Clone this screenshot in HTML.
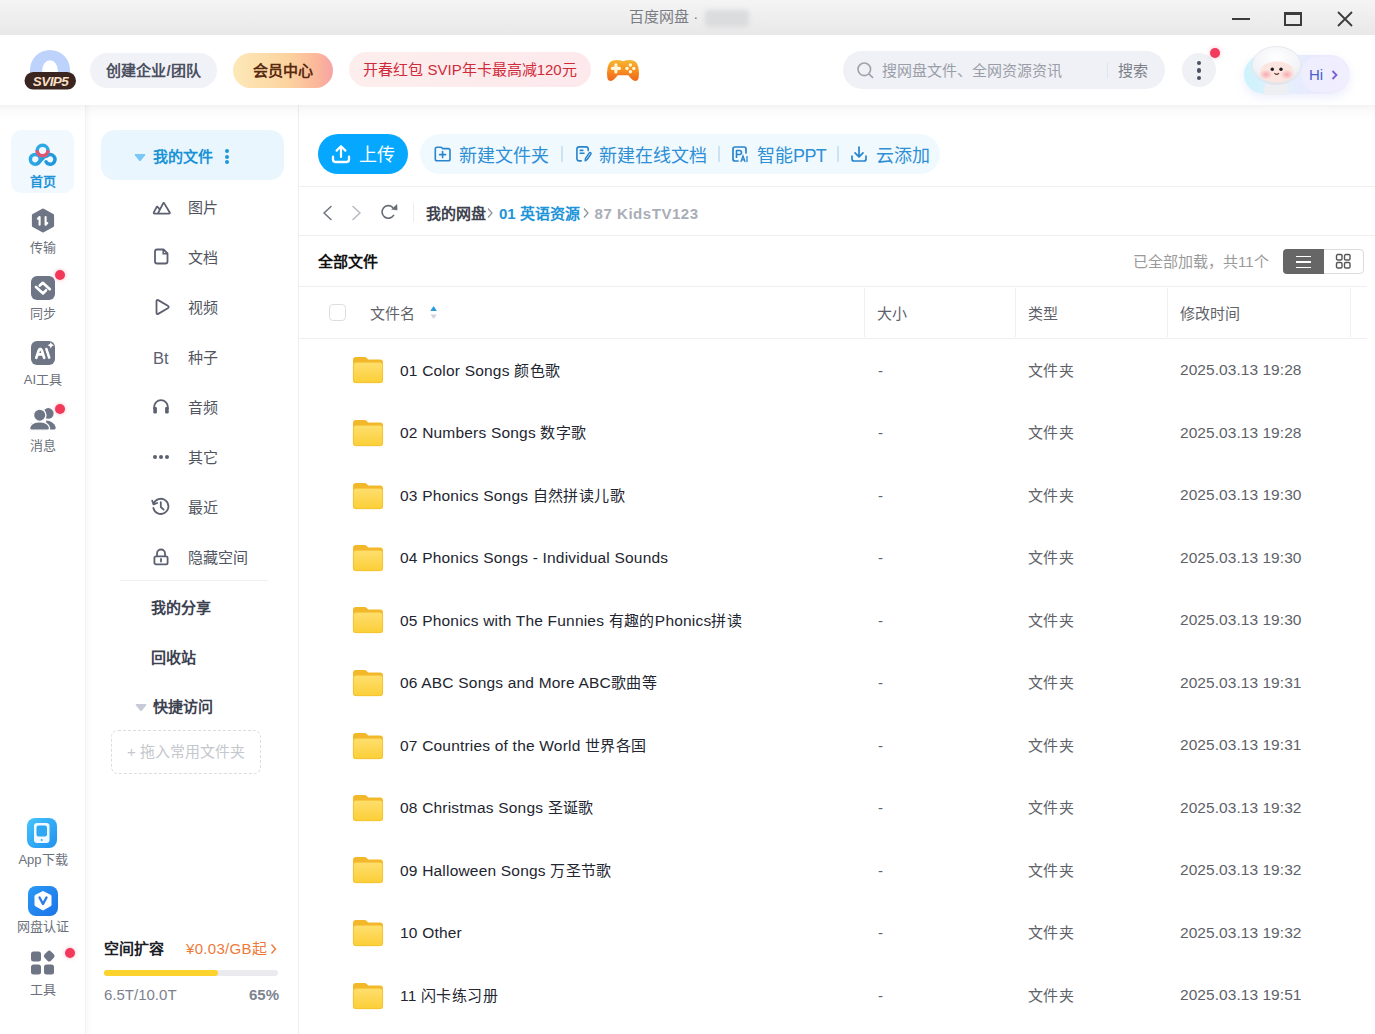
<!DOCTYPE html>
<html lang="zh-CN"><head><meta charset="utf-8">
<style>
*{box-sizing:border-box;margin:0;padding:0}
html,body{width:1375px;height:1034px;overflow:hidden;background:#fff;font-family:"Liberation Sans",sans-serif;color:#333}
.a{position:absolute}
.t{position:absolute;white-space:nowrap;line-height:20px;height:20px}
svg{position:absolute;overflow:visible}
#title{left:0;top:0;width:1375px;height:35px;background:linear-gradient(#f4f4f4,#e8e8e8)}
#header{left:0;top:35px;width:1375px;height:70px;background:#fff}
#shadow{left:0;top:105px;width:1375px;height:14px;background:linear-gradient(rgba(0,0,0,.05),rgba(0,0,0,.035) 14%,rgba(0,0,0,.024) 30%,rgba(0,0,0,.014) 50%,rgba(0,0,0,.006) 75%,rgba(0,0,0,0))}
#nav{left:0;top:105px;width:86px;height:929px;background:#fff;border-right:1px solid #f3f3f4}
#side{left:86px;top:105px;width:213px;height:929px;background:linear-gradient(90deg,#f9f9f9,#fdfdfd 4px,#fff 6px);border-right:1px solid #eeeeef}
#main{left:299px;top:105px;width:1076px;height:929px;background:#fff}
.nt{font-size:13px;color:#6b707b;width:86px;left:0;text-align:center}
.si{font-size:15px;color:#50545e;left:102px}
.row .t{font-size:15px}
</style></head><body>
<!-- TITLE BAR -->
<div id="title" class="a">
  <div class="t" style="left:629px;top:7px;font-size:15px;color:#7a7d83">百度网盘 ·</div>
  <div class="a" style="left:705px;top:10px;width:44px;height:17px;background:#dbdcde;border-radius:4px;filter:blur(2px)"></div>
  <div class="a" style="left:1232px;top:18px;width:18px;height:2px;background:#3c3c3c"></div>
  <div class="a" style="left:1284px;top:12px;width:18px;height:14px;border:2px solid #3c3c3c;border-top-width:3px"></div>
  <svg style="left:1337px;top:11px" width="16" height="16" viewBox="0 0 16 16"><path d="M1 1L15 15M15 1L1 15" stroke="#3c3c3c" stroke-width="1.8"/></svg>
</div>
<!-- HEADER -->
<div id="header" class="a">
</div>
<div id="nav" class="a"></div>
<div id="side" class="a"></div>
<div id="main" class="a"></div>
<div id="shadow" class="a"></div>
<!-- NAV -->
<div class="a" style="left:11px;top:130px;width:63px;height:63px;border-radius:10px;background:#f1f8fe"></div>
<svg style="left:24px;top:140px" width="38" height="30" viewBox="0 0 38 30">
  <circle cx="11.3" cy="19.3" r="4.9" fill="none" stroke="#2ba6e6" stroke-width="3.5"/>
  <path d="M13.8 23.2 L22.5 14.8" stroke="#2a9fe2" stroke-width="3.5" stroke-linecap="round"/>
  <path d="M22.8 16 A4.8 4.8 0 1 1 22.04 21.8" fill="none" stroke="#1f98dd" stroke-width="3.5" stroke-linecap="round"/>
  <circle cx="18.6" cy="10.8" r="5.45" fill="none" stroke="#2fa8e6" stroke-width="3.5"/>
  <path d="M24.05 10.3 A5.45 5.45 0 0 1 13.15 10.3" fill="none" stroke="#e1556f" stroke-width="3.5"/>
</svg>
<div class="t nt" style="top:172px;color:#1f94da;font-weight:600">首页</div>
<svg style="left:31px;top:208px" width="24" height="25" viewBox="0 0 24 25">
  <path d="M12 2 L21.6 7.3 V17.7 L12 23 L2.4 17.7 V7.3 Z" fill="#6e7585" stroke="#6e7585" stroke-width="3" stroke-linejoin="round"/>
  <path d="M8.6 9 V16.8 M6.9 10.7 L8.6 9" stroke="#fff" stroke-width="2.1" stroke-linecap="round" fill="none"/>
  <path d="M14.6 9 V16.8 M14.6 16.8 L16.3 15.1" stroke="#fff" stroke-width="2.1" stroke-linecap="round" fill="none"/>
</svg>
<div class="t nt" style="top:238px">传输</div>
<svg style="left:31px;top:276px" width="24" height="24" viewBox="0 0 24 24">
  <rect x="0" y="0" width="24" height="24" rx="6" fill="#6e7585"/>
  <path d="M8.8 9.6 L11.8 6.8 L18.8 13.2 M5 11 L12.1 17.4 L15 14.3" stroke="#fff" stroke-width="2.7" stroke-linecap="round" stroke-linejoin="round" fill="none"/>
</svg>
<div class="a" style="left:55px;top:270px;width:10px;height:10px;border-radius:5px;background:#f2395b;box-shadow:0 0 4px rgba(242,57,91,.35)"></div>
<div class="t nt" style="top:304px">同步</div>
<svg style="left:31px;top:341px" width="24" height="24" viewBox="0 0 24 24">
  <rect x="0" y="0" width="24" height="24" rx="6" fill="#6e7585"/>
  <path d="M5.3 16.8 L7.6 9.8 Q9.2 6 11 9.8 L13.2 16.8 M6.8 13.4 H11.8" stroke="#fff" stroke-width="2.7" stroke-linecap="round" stroke-linejoin="round" fill="none"/>
  <path d="M15.4 8 L18.2 16.6" stroke="#fff" stroke-width="2.6" stroke-linecap="round"/>
  <path d="M19.8 1.2 Q20.4 3.8 23 4.3 Q20.4 4.8 19.8 7.4 Q19.2 4.8 16.6 4.3 Q19.2 3.8 19.8 1.2Z" fill="#fff"/>
</svg>
<div class="t nt" style="top:370px">AI工具</div>
<svg style="left:29px;top:407px" width="28" height="24" viewBox="0 0 28 24">
  <circle cx="19.3" cy="6.4" r="5.3" fill="#6e7585"/>
  <path d="M17 13.5 Q24.5 14 26.6 20 Q27 22.6 24.6 22.6 H18 Z" fill="#6e7585"/>
  <circle cx="10.7" cy="8.2" r="6.2" fill="#6e7585" stroke="#fff" stroke-width="1.4"/>
  <path d="M0.5 21 Q1.8 14.8 10.5 14.8 Q19.4 14.8 20.6 21 Q20.6 23.2 18.4 23.2 H2.8 Q0.5 23.2 0.5 21Z" fill="#6e7585" stroke="#fff" stroke-width="1.3"/>
</svg>
<div class="a" style="left:55px;top:404px;width:10px;height:10px;border-radius:5px;background:#f2395b;box-shadow:0 0 4px rgba(242,57,91,.35)"></div>
<div class="t nt" style="top:436px">消息</div>

<svg style="left:27px;top:818px" width="30" height="30" viewBox="0 0 30 30">
  <defs><linearGradient id="ag" x1="0" y1="0" x2="1" y2="1"><stop offset="0" stop-color="#45c4fc"/><stop offset="1" stop-color="#2091ef"/></linearGradient></defs>
  <rect x="0" y="0" width="30" height="30" rx="8" fill="url(#ag)"/>
  <rect x="7" y="5" width="15.5" height="20" rx="3" fill="#fff" opacity=".92"/>
  <rect x="9.5" y="7.5" width="10.5" height="11" rx="2" fill="#2ea8f4"/>
  <circle cx="14.7" cy="22" r="1" fill="#2ea8f4"/>
</svg>
<div class="t nt" style="top:850px">App下载</div>
<svg style="left:28px;top:886px" width="30" height="30" viewBox="0 0 30 30">
  <defs><linearGradient id="vg" x1="0" y1="0" x2="1" y2="1"><stop offset="0" stop-color="#2a9af5"/><stop offset="1" stop-color="#1a73e8"/></linearGradient></defs>
  <rect x="0" y="0" width="30" height="30" rx="8" fill="url(#vg)"/>
  <path d="M15 5.5 L23 9.5 V19.5 L15 24 L7 19.5 V9.5 Z" fill="#fff" stroke="#fff" stroke-width="1" stroke-linejoin="round"/>
  <path d="M11.5 11.5 L15 18 L18.5 11.5" stroke="#2a7ee6" stroke-width="2.4" fill="none" stroke-linecap="round" stroke-linejoin="round"/>
</svg>
<div class="t nt" style="top:917px">网盘认证</div>
<svg style="left:30px;top:950px" width="26" height="26" viewBox="0 0 26 26">
  <rect x="1" y="1.5" width="10" height="10" rx="2.5" fill="#6e7585"/>
  <rect x="14.5" y="1.5" width="9" height="9" rx="2.5" fill="#6e7585" transform="rotate(45 19 6.3)"/>
  <rect x="1" y="14.5" width="10" height="10" rx="2.5" fill="#6e7585"/>
  <rect x="14" y="14.5" width="10" height="10" rx="2.5" fill="#6e7585"/>
</svg>
<div class="a" style="left:65px;top:948px;width:10px;height:10px;border-radius:5px;background:#f2395b;box-shadow:0 0 4px rgba(242,57,91,.35)"></div>
<div class="t nt" style="top:980px">工具</div>
<!-- SIDEBAR -->
<div class="a" style="left:101px;top:130px;width:183px;height:50px;border-radius:14px;background:#e9f6fe"></div>
<svg style="left:134px;top:153px" width="12" height="9" viewBox="0 0 12 9"><path d="M1.5 1 H10.5 Q12 1 11 2.4 L7 7.5 Q6 8.6 5 7.5 L1 2.4 Q0 1 1.5 1Z" fill="#7cc8f5"/></svg>
<div class="t" style="left:153px;top:147px;font-size:15px;font-weight:700;color:#1a93d6">我的文件</div>
<div class="a" style="left:225.4px;top:149px;width:4px;height:4px;border-radius:2px;background:#2196d6"></div>
<div class="a" style="left:225.4px;top:154.6px;width:4px;height:4px;border-radius:2px;background:#2196d6"></div>
<div class="a" style="left:225.4px;top:160.2px;width:4px;height:4px;border-radius:2px;background:#2196d6"></div>

<svg style="left:152px;top:200px" width="20" height="16" viewBox="0 0 20 16">
  <path d="M5.8 13.6 L11 3.6 Q11.7 2.3 12.4 3.6 L17.6 12.2 Q18.4 13.6 16.8 13.6 H2.8 Q1.2 13.6 1.9 12.2 L4.5 7.3 Q5.2 6.1 6 7.2 L7.3 8.9" fill="none" stroke="#5c6070" stroke-width="1.8" stroke-linejoin="round" stroke-linecap="round"/>
</svg>
<div class="t si" style="left:188px;top:197.8px">图片</div>
<svg style="left:153px;top:248px" width="16" height="17" viewBox="0 0 16 17">
  <path d="M4 1.5 H10.5 L14.5 5.5 V13.5 Q14.5 15.5 12.5 15.5 H4 Q2 15.5 2 13.5 V3.5 Q2 1.5 4 1.5Z" fill="none" stroke="#5c6070" stroke-width="1.8" stroke-linejoin="round"/>
  <path d="M10.2 1.8 V5.8 H14.3" fill="none" stroke="#5c6070" stroke-width="1.5"/>
</svg>
<div class="t si" style="left:188px;top:247.8px">文档</div>
<svg style="left:154px;top:298px" width="16" height="18" viewBox="0 0 16 18">
  <path d="M2.5 3.5 Q2.5 1.2 4.6 2.4 L13.8 7.8 Q15.6 9 13.8 10.2 L4.6 15.6 Q2.5 16.8 2.5 14.5 Z" fill="none" stroke="#5c6070" stroke-width="1.8" stroke-linejoin="round"/>
</svg>
<div class="t si" style="left:188px;top:297.8px">视频</div>
<div class="t" style="left:153px;top:347.5px;font-size:16.5px;color:#5c6070">Bt</div>
<div class="t si" style="left:188px;top:347.8px">种子</div>
<svg style="left:152px;top:398px" width="18" height="17" viewBox="0 0 18 17">
  <path d="M2.2 11 V9 A6.8 6.8 0 0 1 15.8 9 V11" fill="none" stroke="#5c6070" stroke-width="1.8"/>
  <rect x="1.3" y="9" width="3.6" height="6.5" rx="1.2" fill="#5c6070"/>
  <rect x="13.1" y="9" width="3.6" height="6.5" rx="1.2" fill="#5c6070"/>
</svg>
<div class="t si" style="left:188px;top:397.8px">音频</div>
<div class="a" style="left:153.3px;top:455px;width:4px;height:4px;border-radius:2px;background:#5c6070"></div>
<div class="a" style="left:159.3px;top:455px;width:4px;height:4px;border-radius:2px;background:#5c6070"></div>
<div class="a" style="left:165.3px;top:455px;width:4px;height:4px;border-radius:2px;background:#5c6070"></div>
<div class="t si" style="left:188px;top:447.8px">其它</div>
<svg style="left:151px;top:497px" width="20" height="20" viewBox="0 0 20 20">
  <path d="M2.6 7 A7.6 7.6 0 1 1 2.4 11" fill="none" stroke="#5c6070" stroke-width="1.8" stroke-linecap="round"/>
  <path d="M1.2 3.6 L2.6 7.4 L6.2 6" fill="none" stroke="#5c6070" stroke-width="1.8" stroke-linecap="round" stroke-linejoin="round"/>
  <path d="M9.8 5.2 V10 L12.6 12.6" fill="none" stroke="#5c6070" stroke-width="1.8" stroke-linecap="round" stroke-linejoin="round"/>
</svg>
<div class="t si" style="left:188px;top:497.8px">最近</div>
<svg style="left:152px;top:548px" width="18" height="18" viewBox="0 0 18 18">
  <path d="M5 8.5 V5.5 A4 4 0 0 1 13 5.5 V8.5" fill="none" stroke="#5c6070" stroke-width="1.8"/>
  <rect x="2.4" y="8.4" width="13.2" height="8" rx="1.6" fill="none" stroke="#5c6070" stroke-width="1.8"/>
  <path d="M9 11 V13.6" stroke="#5c6070" stroke-width="1.8" stroke-linecap="round"/>
</svg>
<div class="t si" style="left:188px;top:547.8px">隐藏空间</div>
<div class="a" style="left:120px;top:580px;width:148px;height:1px;background:#f0f0f3"></div>
<div class="t" style="left:151px;top:598px;font-size:15px;font-weight:700;color:#3c4150">我的分享</div>
<div class="t" style="left:151px;top:648px;font-size:15px;font-weight:700;color:#3c4150">回收站</div>
<svg style="left:135px;top:703px" width="12" height="9" viewBox="0 0 12 9"><path d="M1.5 1 H10.5 Q12 1 11 2.4 L7 7.5 Q6 8.6 5 7.5 L1 2.4 Q0 1 1.5 1Z" fill="#c8cad8"/></svg>
<div class="t" style="left:153px;top:697px;font-size:15px;font-weight:700;color:#3c4150">快捷访问</div>
<div class="a" style="left:111px;top:730px;width:150px;height:44px;border-radius:7px;border:1px dashed #dcdde3"></div>
<div class="t" style="left:111px;top:742px;width:150px;text-align:center;font-size:15px;color:#c5c7ce">+ 拖入常用文件夹</div>

<div class="t" style="left:104px;top:939px;font-size:15px;font-weight:700;color:#1b1e28">空间扩容</div>
<div class="t" style="left:186px;top:939px;font-size:15px;letter-spacing:0.3px;color:#ee7a3a">¥0.03/GB起</div>
<svg style="left:270px;top:943px" width="7" height="12" viewBox="0 0 7 12"><path d="M1.5 1.5 L5.5 6 L1.5 10.5" stroke="#ee7a3a" stroke-width="1.4" fill="none"/></svg>
<div class="a" style="left:104px;top:969.5px;width:174px;height:6.5px;border-radius:4px;background:#ebebef"></div>
<div class="a" style="left:104px;top:969.5px;width:114px;height:6.5px;border-radius:4px;background:#fbd32c"></div>
<div class="t" style="left:104px;top:985px;font-size:15px;color:#7d818d">6.5T/10.0T</div>
<div class="t" style="left:200px;top:985px;width:79px;text-align:right;font-size:15px;font-weight:700;color:#7d838f">65%</div>
<!-- MAIN -->
<div class="a" style="left:318px;top:134px;width:90px;height:40px;border-radius:20px;background:#06a7ff"></div>
<svg style="left:331px;top:144px" width="20" height="20" viewBox="0 0 20 20">
  <path d="M10 13 V2.5 M5.6 6.6 L10 2.2 L14.4 6.6" stroke="#fff" stroke-width="2.2" fill="none" stroke-linecap="round" stroke-linejoin="round"/>
  <path d="M2 12.6 V15.6 Q2 18 4.4 18 H15.6 Q18 18 18 15.6 V12.6" stroke="#fff" stroke-width="2.3" fill="none" stroke-linecap="round"/>
</svg>
<div class="t" style="left:359px;top:143px;height:24px;line-height:24px;font-size:18px;color:#fff">上传</div>
<div class="a" style="left:420px;top:134px;width:520px;height:40px;border-radius:20px;background:#eff9fe"></div>
<svg style="left:433px;top:145px" width="19" height="17" viewBox="0 0 19 17">
  <path d="M2.3 4 Q2.3 2.3 4 2.3 H7.6 Q8.4 2.3 9 2.9 L9.8 3.6 H15.3 Q17 3.6 17 5.3 V13.9 Q17 15.7 15.3 15.7 H4 Q2.3 15.7 2.3 13.9 Z" fill="none" stroke="#2a84cc" stroke-width="1.6" stroke-linejoin="round"/>
  <path d="M9.6 6.6 V12.6 M6.6 9.6 H12.6" stroke="#2a84cc" stroke-width="1.6" stroke-linecap="round"/>
</svg>
<div class="t" style="left:459px;top:144px;height:24px;line-height:24px;font-size:18px;color:#2f8fd5">新建文件夹</div>
<div class="a" style="left:561px;top:146px;width:1.5px;height:16px;background:#cde3f2"></div>
<svg style="left:575px;top:145px" width="18" height="18" viewBox="0 0 18 18">
  <path d="M13.2 5.6 V4.2 Q13.2 1.9 10.9 1.9 H4.2 Q1.9 1.9 1.9 4.2 V13.6 Q1.9 15.9 4.2 15.9 H6.2" fill="none" stroke="#2a84cc" stroke-width="1.6" stroke-linecap="round"/>
  <path d="M5.3 5.4 H7.8 M5.1 8.3 H9" stroke="#2a84cc" stroke-width="1.6" stroke-linecap="round"/>
  <path d="M10.2 15.8 L10.4 13.6 L14.3 7.9 Q14.9 7.1 15.7 7.7 Q16.4 8.3 15.9 9.1 L12 14.7 Z" fill="none" stroke="#2a84cc" stroke-width="1.5" stroke-linejoin="round"/>
</svg>
<div class="t" style="left:599px;top:144px;height:24px;line-height:24px;font-size:18px;color:#2f8fd5">新建在线文档</div>
<div class="a" style="left:718px;top:146px;width:1.5px;height:16px;background:#cde3f2"></div>
<svg style="left:731px;top:145px" width="18" height="18" viewBox="0 0 18 18">
  <path d="M7 16 H4 Q2 16 2 14 V4 Q2 2 4 2 H13 Q15 2 15 4 V8" fill="none" stroke="#2a84cc" stroke-width="1.7" stroke-linecap="round"/>
  <path d="M5.5 13 V5.5 H8.5 Q10.5 5.5 10.5 7.5 Q10.5 9.5 8.5 9.5 H5.5" fill="none" stroke="#2a84cc" stroke-width="1.6" stroke-linejoin="round"/>
  <path d="M10 16.5 L12 11 L14 16.5 M10.8 14.8 H13.2 M16 11.5 V16.5" stroke="#2a84cc" stroke-width="1.3" fill="none" stroke-linecap="round"/>
</svg>
<div class="t" style="left:757px;top:144px;height:24px;line-height:24px;font-size:18px;color:#2f8fd5">智能<span style="letter-spacing:-0.6px">PPT</span></div>
<div class="a" style="left:837px;top:146px;width:1.5px;height:16px;background:#cde3f2"></div>
<svg style="left:850px;top:145px" width="18" height="18" viewBox="0 0 18 18">
  <path d="M9 2 V11.5 M5 7.8 L9 11.8 L13 7.8" stroke="#2a84cc" stroke-width="1.7" fill="none" stroke-linecap="round" stroke-linejoin="round"/>
  <path d="M2 11 V14 Q2 16 4 16 H14 Q16 16 16 14 V11" stroke="#2a84cc" stroke-width="1.7" fill="none" stroke-linecap="round"/>
</svg>
<div class="t" style="left:876px;top:144px;height:24px;line-height:24px;font-size:18px;color:#2f8fd5">云添加</div>
<div class="a" style="left:299px;top:186px;width:1076px;height:1px;background:#efeff2"></div>

<!-- breadcrumb -->
<svg style="left:321px;top:205px" width="12" height="16" viewBox="0 0 12 16"><path d="M10 1.5 L3 8 L10 14.5" stroke="#707580" stroke-width="1.6" fill="none" stroke-linecap="round" stroke-linejoin="round"/></svg>
<svg style="left:350.5px;top:205px" width="12" height="16" viewBox="0 0 12 16"><path d="M2 1.5 L9 8 L2 14.5" stroke="#b8bbc3" stroke-width="1.6" fill="none" stroke-linecap="round" stroke-linejoin="round"/></svg>
<svg style="left:380px;top:203px" width="19" height="19" viewBox="0 0 19 19">
  <path d="M12.6 4.3 A6.3 6.3 0 1 0 13.6 12.4" fill="none" stroke="#676b73" stroke-width="1.6" stroke-linecap="round"/>
  <path d="M16.9 1.6 L17.1 7 L11.7 6.3 Z" fill="#676b73" stroke="#676b73" stroke-width=".6" stroke-linejoin="round"/>
</svg>
<div class="a" style="left:413px;top:203px;width:1px;height:19px;background:#ededf0"></div>
<div class="t" style="left:426px;top:203.5px;font-size:15px;font-weight:700;color:#3e424d">我的网盘</div>
<svg style="left:487px;top:207px" width="6" height="12" viewBox="0 0 6 12"><path d="M1 1.5 L5 6 L1 10.5" stroke="#8a8e98" stroke-width="1.2" fill="none"/></svg>
<div class="t" style="left:499px;top:203.5px;font-size:15px;font-weight:700;color:#1e95d8">01 英语资源</div>
<svg style="left:583px;top:207px" width="6" height="12" viewBox="0 0 6 12"><path d="M1 1.5 L5 6 L1 10.5" stroke="#8a8e98" stroke-width="1.2" fill="none"/></svg>
<div class="t" style="left:594.5px;top:203.5px;font-size:15px;font-weight:700;letter-spacing:0.55px;color:#a9adb7">87 KidsTV123</div>
<div class="a" style="left:299px;top:235px;width:1076px;height:1px;background:#efeff2"></div>

<!-- list header -->
<div class="t" style="left:317.5px;top:251.5px;font-size:15px;font-weight:700;color:#111">全部文件</div>
<div class="t" style="left:1133px;top:252px;font-size:15px;color:#9a9a9a">已全部加载，共11个</div>
<div class="a" style="left:1283px;top:249px;width:81px;height:25px;border-radius:4px;border:1px solid #dcdcdc;background:#fff"></div>
<div class="a" style="left:1283px;top:249px;width:41px;height:25px;border-radius:4px 0 0 4px;background:#666"></div>
<div class="a" style="left:1296px;top:255.5px;width:15px;height:1.8px;background:#fff"></div>
<div class="a" style="left:1296px;top:261px;width:15px;height:1.8px;background:#fff"></div>
<div class="a" style="left:1296px;top:266.6px;width:15px;height:1.8px;background:#fff"></div>
<svg style="left:1335px;top:253px" width="17" height="17" viewBox="0 0 17 17">
  <rect x="1.5" y="1.5" width="5.5" height="5.5" rx="1.3" fill="none" stroke="#555" stroke-width="1.4"/>
  <rect x="9.5" y="1.5" width="5.5" height="5.5" rx="1.3" fill="none" stroke="#555" stroke-width="1.4"/>
  <rect x="1.5" y="9.5" width="5.5" height="5.5" rx="1.3" fill="none" stroke="#555" stroke-width="1.4"/>
  <rect x="9.5" y="9.5" width="5.5" height="5.5" rx="1.3" fill="none" stroke="#555" stroke-width="1.4"/>
</svg>
<div class="a" style="left:299px;top:286px;width:1068px;height:1px;background:#efeff2"></div>
<div class="a" style="left:329px;top:304px;width:17px;height:17px;border-radius:4px;border:1px solid #dedee2;background:#fff"></div>
<div class="t" style="left:369.5px;top:303.5px;font-size:15px;color:#5f6369">文件名</div>
<svg style="left:429px;top:305px" width="9" height="15" viewBox="0 0 9 15"><path d="M4.2 1.6 Q4.6 1.2 5 1.6 L7.6 5.4 Q7.9 6 7.2 6 H1.9 Q1.3 6 1.6 5.4 Z" fill="#2a9be0"/><path d="M4.2 13.4 Q4.6 13.8 5 13.4 L7.4 10 Q7.7 9.4 7 9.4 H2.1 Q1.5 9.4 1.8 10 Z" fill="#d3d1dc"/></svg>
<div class="a" style="left:864px;top:288px;width:1px;height:49px;background:#f0f0f2"></div>
<div class="t" style="left:877px;top:303.5px;font-size:15px;color:#5f6369">大小</div>
<div class="a" style="left:1015px;top:288px;width:1px;height:49px;background:#f0f0f2"></div>
<div class="t" style="left:1028px;top:303.5px;font-size:15px;color:#5f6369">类型</div>
<div class="a" style="left:1167px;top:288px;width:1px;height:49px;background:#f0f0f2"></div>
<div class="t" style="left:1180px;top:303.5px;font-size:15px;color:#5f6369">修改时间</div>
<div class="a" style="left:1350px;top:288px;width:1px;height:49px;background:#f0f0f2"></div>
<div class="a" style="left:299px;top:338px;width:1068px;height:1px;background:#efeff2"></div>
<svg width="0" height="0" style="left:0;top:0"><defs><linearGradient id="fg" x1="0" y1="0" x2="0" y2="1"><stop offset="0" stop-color="#fedf6e"/><stop offset="1" stop-color="#fccf38"/></linearGradient></defs></svg>
<svg style="left:352px;top:356px" width="32" height="28" viewBox="0 0 32 28">
  <path d="M1 4 Q1 1 4 1 H12.5 Q14 1 15 2.2 L16.2 3.6 H28 Q31 3.6 31 6.6 V24 Q31 27 28 27 H4 Q1 27 1 24 Z" fill="#f3b72a"/>
  <rect x="1.4" y="6.3" width="29.2" height="20.4" rx="2.8" fill="url(#fg)" stroke="#f4c232" stroke-width=".8"/>
</svg>
<div class="t" style="left:400px;top:360.7px;font-size:15.5px;letter-spacing:0.2px;color:#222530">01 Color Songs <span style="font-size:15px;letter-spacing:0.4px">颜色歌</span></div>
<div class="t" style="left:878px;top:360.6px;font-size:15px;color:#5e6268">-</div>
<div class="t" style="left:1028px;top:360.6px;font-size:15px;letter-spacing:0.4px;color:#5e6268">文件夹</div>
<div class="t" style="left:1180px;top:360.3px;font-size:15.5px;letter-spacing:0.05px;color:#5e6268">2025.03.13 19:28</div>
<svg style="left:352px;top:419px" width="32" height="28" viewBox="0 0 32 28">
  <path d="M1 4 Q1 1 4 1 H12.5 Q14 1 15 2.2 L16.2 3.6 H28 Q31 3.6 31 6.6 V24 Q31 27 28 27 H4 Q1 27 1 24 Z" fill="#f3b72a"/>
  <rect x="1.4" y="6.3" width="29.2" height="20.4" rx="2.8" fill="url(#fg)" stroke="#f4c232" stroke-width=".8"/>
</svg>
<div class="t" style="left:400px;top:423.2px;font-size:15.5px;letter-spacing:0.2px;color:#222530">02 Numbers Songs <span style="font-size:15px;letter-spacing:0.4px">数字歌</span></div>
<div class="t" style="left:878px;top:423.1px;font-size:15px;color:#5e6268">-</div>
<div class="t" style="left:1028px;top:423.1px;font-size:15px;letter-spacing:0.4px;color:#5e6268">文件夹</div>
<div class="t" style="left:1180px;top:422.8px;font-size:15.5px;letter-spacing:0.05px;color:#5e6268">2025.03.13 19:28</div>
<svg style="left:352px;top:482px" width="32" height="28" viewBox="0 0 32 28">
  <path d="M1 4 Q1 1 4 1 H12.5 Q14 1 15 2.2 L16.2 3.6 H28 Q31 3.6 31 6.6 V24 Q31 27 28 27 H4 Q1 27 1 24 Z" fill="#f3b72a"/>
  <rect x="1.4" y="6.3" width="29.2" height="20.4" rx="2.8" fill="url(#fg)" stroke="#f4c232" stroke-width=".8"/>
</svg>
<div class="t" style="left:400px;top:485.7px;font-size:15.5px;letter-spacing:0.2px;color:#222530">03 Phonics Songs <span style="font-size:15px;letter-spacing:0.4px">自然拼读儿歌</span></div>
<div class="t" style="left:878px;top:485.6px;font-size:15px;color:#5e6268">-</div>
<div class="t" style="left:1028px;top:485.6px;font-size:15px;letter-spacing:0.4px;color:#5e6268">文件夹</div>
<div class="t" style="left:1180px;top:485.3px;font-size:15.5px;letter-spacing:0.05px;color:#5e6268">2025.03.13 19:30</div>
<svg style="left:352px;top:544px" width="32" height="28" viewBox="0 0 32 28">
  <path d="M1 4 Q1 1 4 1 H12.5 Q14 1 15 2.2 L16.2 3.6 H28 Q31 3.6 31 6.6 V24 Q31 27 28 27 H4 Q1 27 1 24 Z" fill="#f3b72a"/>
  <rect x="1.4" y="6.3" width="29.2" height="20.4" rx="2.8" fill="url(#fg)" stroke="#f4c232" stroke-width=".8"/>
</svg>
<div class="t" style="left:400px;top:548.2px;font-size:15.5px;letter-spacing:0.2px;color:#222530">04 Phonics Songs - Individual Sounds</div>
<div class="t" style="left:878px;top:548.1px;font-size:15px;color:#5e6268">-</div>
<div class="t" style="left:1028px;top:548.1px;font-size:15px;letter-spacing:0.4px;color:#5e6268">文件夹</div>
<div class="t" style="left:1180px;top:547.8px;font-size:15.5px;letter-spacing:0.05px;color:#5e6268">2025.03.13 19:30</div>
<svg style="left:352px;top:606px" width="32" height="28" viewBox="0 0 32 28">
  <path d="M1 4 Q1 1 4 1 H12.5 Q14 1 15 2.2 L16.2 3.6 H28 Q31 3.6 31 6.6 V24 Q31 27 28 27 H4 Q1 27 1 24 Z" fill="#f3b72a"/>
  <rect x="1.4" y="6.3" width="29.2" height="20.4" rx="2.8" fill="url(#fg)" stroke="#f4c232" stroke-width=".8"/>
</svg>
<div class="t" style="left:400px;top:610.7px;font-size:15.5px;letter-spacing:0.2px;color:#222530">05 Phonics with The Funnies <span style="font-size:15px;letter-spacing:0.4px">有趣的</span>Phonics<span style="font-size:15px;letter-spacing:0.4px">拼读</span></div>
<div class="t" style="left:878px;top:610.6px;font-size:15px;color:#5e6268">-</div>
<div class="t" style="left:1028px;top:610.6px;font-size:15px;letter-spacing:0.4px;color:#5e6268">文件夹</div>
<div class="t" style="left:1180px;top:610.3px;font-size:15.5px;letter-spacing:0.05px;color:#5e6268">2025.03.13 19:30</div>
<svg style="left:352px;top:669px" width="32" height="28" viewBox="0 0 32 28">
  <path d="M1 4 Q1 1 4 1 H12.5 Q14 1 15 2.2 L16.2 3.6 H28 Q31 3.6 31 6.6 V24 Q31 27 28 27 H4 Q1 27 1 24 Z" fill="#f3b72a"/>
  <rect x="1.4" y="6.3" width="29.2" height="20.4" rx="2.8" fill="url(#fg)" stroke="#f4c232" stroke-width=".8"/>
</svg>
<div class="t" style="left:400px;top:673.2px;font-size:15.5px;letter-spacing:0.2px;color:#222530">06 ABC Songs and More ABC<span style="font-size:15px;letter-spacing:0.4px">歌曲等</span></div>
<div class="t" style="left:878px;top:673.1px;font-size:15px;color:#5e6268">-</div>
<div class="t" style="left:1028px;top:673.1px;font-size:15px;letter-spacing:0.4px;color:#5e6268">文件夹</div>
<div class="t" style="left:1180px;top:672.8px;font-size:15.5px;letter-spacing:0.05px;color:#5e6268">2025.03.13 19:31</div>
<svg style="left:352px;top:732px" width="32" height="28" viewBox="0 0 32 28">
  <path d="M1 4 Q1 1 4 1 H12.5 Q14 1 15 2.2 L16.2 3.6 H28 Q31 3.6 31 6.6 V24 Q31 27 28 27 H4 Q1 27 1 24 Z" fill="#f3b72a"/>
  <rect x="1.4" y="6.3" width="29.2" height="20.4" rx="2.8" fill="url(#fg)" stroke="#f4c232" stroke-width=".8"/>
</svg>
<div class="t" style="left:400px;top:735.7px;font-size:15.5px;letter-spacing:0.2px;color:#222530">07 Countries of the World <span style="font-size:15px;letter-spacing:0.4px">世界各国</span></div>
<div class="t" style="left:878px;top:735.6px;font-size:15px;color:#5e6268">-</div>
<div class="t" style="left:1028px;top:735.6px;font-size:15px;letter-spacing:0.4px;color:#5e6268">文件夹</div>
<div class="t" style="left:1180px;top:735.3px;font-size:15.5px;letter-spacing:0.05px;color:#5e6268">2025.03.13 19:31</div>
<svg style="left:352px;top:794px" width="32" height="28" viewBox="0 0 32 28">
  <path d="M1 4 Q1 1 4 1 H12.5 Q14 1 15 2.2 L16.2 3.6 H28 Q31 3.6 31 6.6 V24 Q31 27 28 27 H4 Q1 27 1 24 Z" fill="#f3b72a"/>
  <rect x="1.4" y="6.3" width="29.2" height="20.4" rx="2.8" fill="url(#fg)" stroke="#f4c232" stroke-width=".8"/>
</svg>
<div class="t" style="left:400px;top:798.2px;font-size:15.5px;letter-spacing:0.2px;color:#222530">08 Christmas Songs <span style="font-size:15px;letter-spacing:0.4px">圣诞歌</span></div>
<div class="t" style="left:878px;top:798.1px;font-size:15px;color:#5e6268">-</div>
<div class="t" style="left:1028px;top:798.1px;font-size:15px;letter-spacing:0.4px;color:#5e6268">文件夹</div>
<div class="t" style="left:1180px;top:797.8px;font-size:15.5px;letter-spacing:0.05px;color:#5e6268">2025.03.13 19:32</div>
<svg style="left:352px;top:856px" width="32" height="28" viewBox="0 0 32 28">
  <path d="M1 4 Q1 1 4 1 H12.5 Q14 1 15 2.2 L16.2 3.6 H28 Q31 3.6 31 6.6 V24 Q31 27 28 27 H4 Q1 27 1 24 Z" fill="#f3b72a"/>
  <rect x="1.4" y="6.3" width="29.2" height="20.4" rx="2.8" fill="url(#fg)" stroke="#f4c232" stroke-width=".8"/>
</svg>
<div class="t" style="left:400px;top:860.7px;font-size:15.5px;letter-spacing:0.2px;color:#222530">09 Halloween Songs <span style="font-size:15px;letter-spacing:0.4px">万圣节歌</span></div>
<div class="t" style="left:878px;top:860.6px;font-size:15px;color:#5e6268">-</div>
<div class="t" style="left:1028px;top:860.6px;font-size:15px;letter-spacing:0.4px;color:#5e6268">文件夹</div>
<div class="t" style="left:1180px;top:860.3px;font-size:15.5px;letter-spacing:0.05px;color:#5e6268">2025.03.13 19:32</div>
<svg style="left:352px;top:919px" width="32" height="28" viewBox="0 0 32 28">
  <path d="M1 4 Q1 1 4 1 H12.5 Q14 1 15 2.2 L16.2 3.6 H28 Q31 3.6 31 6.6 V24 Q31 27 28 27 H4 Q1 27 1 24 Z" fill="#f3b72a"/>
  <rect x="1.4" y="6.3" width="29.2" height="20.4" rx="2.8" fill="url(#fg)" stroke="#f4c232" stroke-width=".8"/>
</svg>
<div class="t" style="left:400px;top:923.2px;font-size:15.5px;letter-spacing:0.2px;color:#222530">10 Other</div>
<div class="t" style="left:878px;top:923.1px;font-size:15px;color:#5e6268">-</div>
<div class="t" style="left:1028px;top:923.1px;font-size:15px;letter-spacing:0.4px;color:#5e6268">文件夹</div>
<div class="t" style="left:1180px;top:922.8px;font-size:15.5px;letter-spacing:0.05px;color:#5e6268">2025.03.13 19:32</div>
<svg style="left:352px;top:982px" width="32" height="28" viewBox="0 0 32 28">
  <path d="M1 4 Q1 1 4 1 H12.5 Q14 1 15 2.2 L16.2 3.6 H28 Q31 3.6 31 6.6 V24 Q31 27 28 27 H4 Q1 27 1 24 Z" fill="#f3b72a"/>
  <rect x="1.4" y="6.3" width="29.2" height="20.4" rx="2.8" fill="url(#fg)" stroke="#f4c232" stroke-width=".8"/>
</svg>
<div class="t" style="left:400px;top:985.7px;font-size:15.5px;letter-spacing:0.2px;color:#222530">11 <span style="font-size:15px;letter-spacing:0.4px">闪卡练习册</span></div>
<div class="t" style="left:878px;top:985.6px;font-size:15px;color:#5e6268">-</div>
<div class="t" style="left:1028px;top:985.6px;font-size:15px;letter-spacing:0.4px;color:#5e6268">文件夹</div>
<div class="t" style="left:1180px;top:985.3px;font-size:15.5px;letter-spacing:0.05px;color:#5e6268">2025.03.13 19:51</div>
<!-- HEADER CONTENT -->
<svg style="left:24px;top:48px" width="54" height="44" viewBox="0 0 54 44">
  <path d="M6 22 A20 20 0 0 1 46 22 L46 27 L33.8 27 L33.8 22 A7.8 9.7 0 0 0 18.2 22 L18.2 27 L6 27 Z" fill="#bdd3fb"/>
  <rect x="0.5" y="24" width="51.5" height="17.5" rx="8.75" fill="#3b2521"/>
  <text x="26.5" y="38.2" text-anchor="middle" font-family="Liberation Sans" font-style="italic" font-weight="bold" font-size="13.5" fill="#f7dfc4" letter-spacing="-0.6">SVIP5</text>
</svg>
<div class="a" style="left:90px;top:53px;width:127px;height:35px;border-radius:18px;background:#f1f2f7"></div>
<div class="t" style="left:90px;top:61px;width:127px;text-align:center;font-size:15px;font-weight:600;color:#4a5060">创建企业/团队</div>
<div class="a" style="left:233px;top:53px;width:100px;height:35px;border-radius:18px;background:linear-gradient(90deg,#fde9b8 0%,#fcd39f 55%,#fbb69a 85%,#f7a3a6 100%)"></div>
<div class="t" style="left:233px;top:61px;width:100px;text-align:center;font-size:15px;font-weight:600;color:#5a2a10">会员中心</div>
<div class="a" style="left:349px;top:52px;width:242px;height:35px;border-radius:18px;background:linear-gradient(90deg,#fdeeed,#fde9ec)"></div>
<div class="t" style="left:349px;top:60px;width:242px;text-align:center;font-size:15px;color:#cf2a3a">开春红包 SVIP年卡最高减120元</div>
<svg style="left:606px;top:58px" width="35" height="25" viewBox="0 0 35 25">
  <defs><linearGradient id="gp" x1="0" y1="0" x2="0" y2="1"><stop offset="0" stop-color="#f6b733"/><stop offset=".55" stop-color="#f88a1f"/><stop offset="1" stop-color="#ec661d"/></linearGradient></defs>
  <path d="M8 2.2 Q12.5 1.4 17 3.2 Q21.5 1.4 26 2.2 Q31 3 32.3 9 Q33.6 15 32.6 20.3 Q31.8 23.6 28.5 22.8 Q25.8 22 22.3 17.2 H11.7 Q8.2 22 5.5 22.8 Q2.2 23.6 1.4 20.3 Q0.4 15 1.7 9 Q3 3 8 2.2 Z" fill="url(#gp)"/>
  <path d="M9.9 6.8 V14 M6.3 10.4 H13.5" stroke="#fff8dc" stroke-width="3.1" stroke-linecap="round"/>
  <circle cx="24.4" cy="7" r="1.75" fill="#fff6d0"/><circle cx="24.4" cy="13.8" r="1.75" fill="#fff6d0"/><circle cx="21" cy="10.4" r="1.75" fill="#fff6d0"/><circle cx="27.8" cy="10.4" r="1.75" fill="#fff6d0"/>
</svg>
<!-- search -->
<div class="a" style="left:843px;top:51px;width:322px;height:38px;border-radius:19px;background:#f0f1f6"></div>
<svg style="left:857px;top:62px" width="17" height="16" viewBox="0 0 17 16"><circle cx="7.3" cy="7.3" r="6.3" fill="none" stroke="#9ea2ac" stroke-width="1.6"/><path d="M12 12 L15.5 15.3" stroke="#9ea2ac" stroke-width="1.7" stroke-linecap="round"/></svg>
<div class="t" style="left:882px;top:61px;font-size:15px;color:#9a9ea8">搜网盘文件、全网资源资讯</div>
<div class="a" style="left:1107px;top:62px;width:1px;height:16px;background:#e3e4ea"></div>
<div class="t" style="left:1118px;top:61px;font-size:15px;color:#7c7f88">搜索</div>
<!-- dots -->
<div class="a" style="left:1182px;top:53px;width:34px;height:34px;border-radius:17px;background:#f0f1f5"></div>
<div class="a" style="left:1197px;top:60.5px;width:4.4px;height:4.4px;border-radius:3px;background:#4b5162"></div>
<div class="a" style="left:1197px;top:68.3px;width:4.4px;height:4.4px;border-radius:3px;background:#4b5162"></div>
<div class="a" style="left:1197px;top:75.7px;width:4.4px;height:4.4px;border-radius:3px;background:#4b5162"></div>
<div class="a" style="left:1210px;top:48px;width:10px;height:10px;border-radius:5px;background:#f23a5c;box-shadow:0 0 4px rgba(242,58,92,.35)"></div>
<!-- avatar -->
<div class="a" style="left:1244px;top:55px;width:106px;height:39px;border-radius:20px;background:linear-gradient(90deg,#cdf3fb 0%,#e3effd 40%,#ebe9fd 70%,#f0eefd 100%);box-shadow:0 3px 10px rgba(200,205,250,.35)"></div>
<div class="a" style="left:1301px;top:57px;width:47px;height:35px;border-radius:18px;background:#f1f0fe;opacity:.7"></div>
<svg style="left:1246px;top:44px" width="60" height="52" viewBox="0 0 60 52">
  <defs><radialGradient id="hg" cx=".5" cy=".3" r=".75"><stop offset="0" stop-color="#ffffff"/><stop offset=".7" stop-color="#f1f2f6"/><stop offset="1" stop-color="#d9dce6"/></radialGradient>
  <radialGradient id="ck" cx=".5" cy=".5" r=".5"><stop offset="0" stop-color="#f7a9b2"/><stop offset="1" stop-color="#f7a9b2" stop-opacity="0"/></radialGradient></defs>
  <path d="M19 40 H42 L43 51 H18 Z" fill="#eeeff3"/>
  <ellipse cx="30.6" cy="21.5" rx="24.5" ry="19" fill="url(#hg)" stroke="#e1e3ea" stroke-width=".8"/>
  <ellipse cx="31" cy="28" rx="17" ry="10.5" fill="#fde5df"/>
  <ellipse cx="20" cy="30.5" rx="6.5" ry="5" fill="url(#ck)"/>
  <ellipse cx="41" cy="30.5" rx="6.5" ry="5" fill="url(#ck)"/>
  <circle cx="26.3" cy="25.2" r="1.7" fill="#1d1d22"/><circle cx="35" cy="25.2" r="1.7" fill="#1d1d22"/>
  <path d="M28.7 29.4 Q30.7 31.6 32.7 29.4" stroke="#5a3a30" stroke-width="1.1" fill="#c77" stroke-linecap="round"/>
</svg>
<div class="t" style="left:1309px;top:65px;font-size:15px;color:#4a5ec8">Hi</div>
<svg style="left:1331px;top:70px" width="7" height="10" viewBox="0 0 7 10"><path d="M1.5 1 L5.5 5 L1.5 9" stroke="#7a60d0" stroke-width="1.8" fill="none"/></svg>

</body></html>
